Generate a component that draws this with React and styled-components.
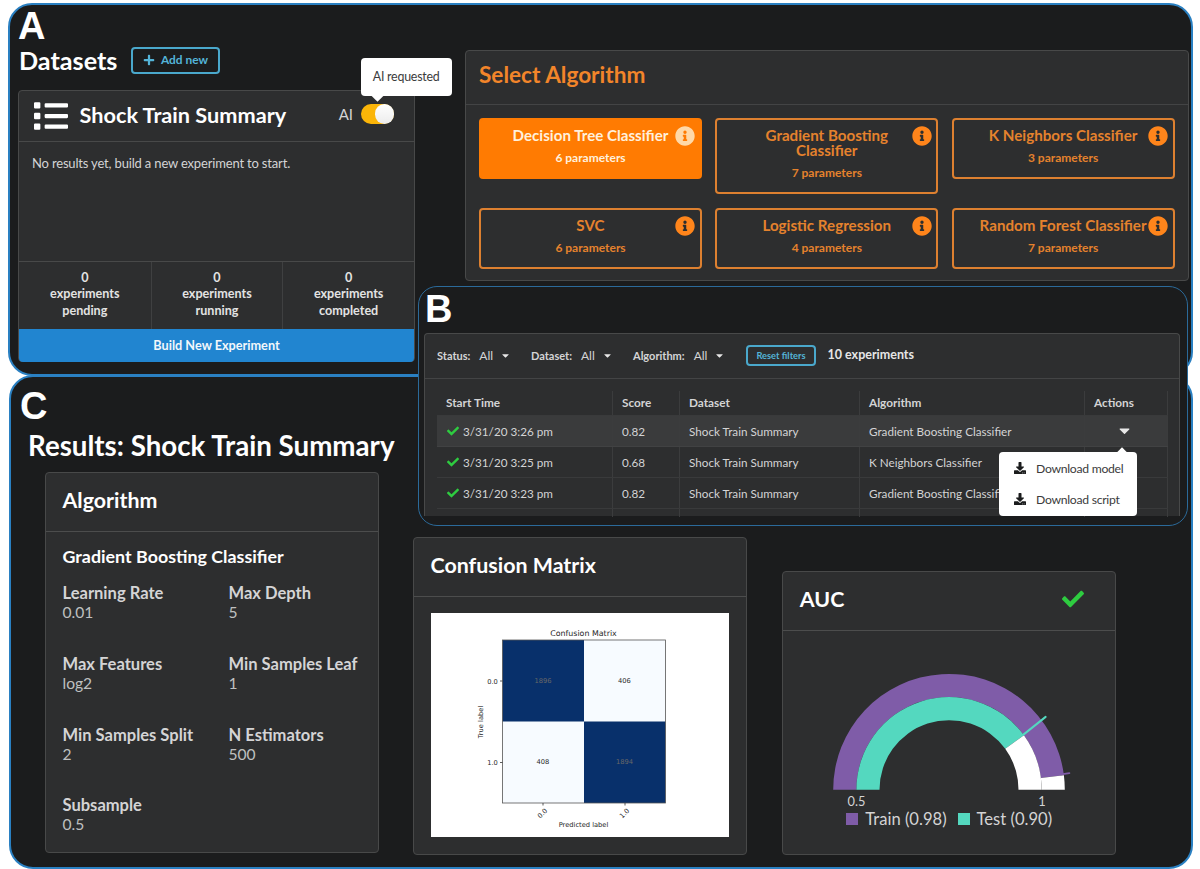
import React from "react";
import styled, { createGlobalStyle, css } from "styled-components";
import { FaList, FaPlus, FaInfoCircle, FaCheck, FaDownload, FaCaretDown } from "react-icons/fa";

const GlobalStyle = createGlobalStyle`
  *, *::before, *::after { box-sizing: border-box; }
  html, body { margin: 0; background: #fff; overflow: hidden; }
  body { font-family: Lato, "Liberation Sans", sans-serif; font-size: 13px; color: #d4d4d5; }
  h1, h2, h3, p, dl, dt, dd { margin: 0; font-weight: inherit; font-size: inherit; }
  button { font-family: inherit; margin: 0; padding: 0; cursor: pointer; }
  svg { display: block; flex-shrink: 0; }
`;

const Page = styled.main`
  position: relative;
  display: flex;
  flex-direction: column;
  width: 1200px;
  height: 869px;
  padding: 3px 0 0 8px;
  overflow: hidden;
`;

const Panel = styled.section`
  background: #1b1c1d;
  border: 2px solid #2a80c2;
  border-radius: 24px;
`;

const BuilderPanel = styled(Panel)`
  display: flex;
  align-items: flex-start;
  width: 1185px;
  height: 373px;
  padding-left: 8px;
`;

const ResultsPanel = styled(Panel)`
  width: 1184px;
  height: 494px;
  margin: -1px 0 0 1px;
  padding: 0 9px;
  flex-shrink: 0;
`;

/* Floats above the other two panels. */
const ExperimentsPanel = styled(Panel)`
  position: absolute;
  left: 418px;
  top: 286px;
  width: 770px;
  height: 240px;
  border: 1.5px solid #2b6a9a;
  border-radius: 19px;
  padding: 0 0 0 5px;
`;

const PanelLetter = styled.div`
  font-family: "Liberation Sans", Arial, sans-serif;
  font-weight: 700;
  font-size: 38px;
  line-height: 42px;
  color: #fff;
`;

const Card = styled.div`
  background: #2d2e2f;
  border: 1px solid #484949;
  border-radius: 4px;
`;

/* ---------- Datasets ---------- */

const DatasetsColumn = styled.div`
  width: 397px;
`;

const DatasetsLetter = styled(PanelLetter)`
  height: 38px;
  padding-left: 0;
`;

const TitleRow = styled.div`
  display: flex;
  align-items: center;
  height: 34px;
  padding-left: 1px;
`;

const PageTitle = styled.h1`
  width: 112px;
  font-size: 25.2px;
  font-weight: 700;
  line-height: 33px;
  color: #fff;
`;

const OutlineButton = styled.button`
  display: flex;
  align-items: center;
  justify-content: center;
  gap: 6px;
  padding-bottom: 1px;
  background: transparent;
  border: 2px solid #4aa8cc;
  border-radius: 4px;
  color: #54b4d8;
  font-weight: 700;
  width: ${(p) => p.$w}px;
  height: ${(p) => p.$h}px;
  font-size: ${(p) => p.$size}px;
`;

const DatasetCard = styled(Card)`
  margin-top: 13px;
  height: 272px;
`;

const DatasetHeader = styled.div`
  display: flex;
  align-items: center;
  height: 51px;
  padding: 0 20px 0 15px;
  border-bottom: 1px solid #484949;
`;

const DatasetName = styled.h2`
  margin: -2px 0 0 11.5px;
  flex: 1;
  font-size: 21.7px;
  font-weight: 700;
  color: #fff;
`;

const AiToggle = styled.div`
  position: relative;
  display: flex;
  align-items: center;
  gap: 8px;
  margin-top: -4px;
  font-size: 15px;
  line-height: 18px;
`;

const Switch = styled.span`
  display: flex;
  justify-content: flex-end;
  width: 33px;
  height: 20px;
  border-radius: 10px;
  background: #fbb508;
  &::after {
    content: "";
    width: 19px;
    height: 20px;
    border-radius: 10px;
    background: linear-gradient(#fff, #ececec);
  }
`;

const popupBase = css`
  position: absolute;
  background: #fff;
  color: #3b3b3c;
  border-radius: 4px;
  &::before {
    content: "";
    position: absolute;
    width: 9px;
    height: 9px;
    background: #fff;
    transform: rotate(45deg);
  }
`;

const Tooltip = styled.div`
  ${popupBase}
  left: 22px;
  bottom: 28px;
  width: 91px;
  height: 38px;
  line-height: 37px;
  text-align: center;
  font-size: 12.4px;
  letter-spacing: -0.22px;
  &::before { left: 12px; bottom: -4px; }
`;

const EmptyNote = styled.p`
  height: 120px;
  padding: 13px 13px;
  line-height: 16px;
  font-size: 13px;
  letter-spacing: -0.17px;
  border-bottom: 1px solid #484949;
`;

const Stats = styled.div`
  display: grid;
  grid-template-columns: repeat(3, 1fr);
  height: 67px;
`;

const Stat = styled.div`
  padding: 7.5px 20px 0;
  text-align: center;
  font-weight: 700;
  font-size: 12.6px;
  line-height: 16.5px;
  color: #e3e3e3;
  & + & { border-left: 1px solid #3f4041; }
`;

const BuildButton = styled.button`
  display: block;
  width: 100%;
  height: 33px;
  padding-bottom: 2px;
  border: 0;
  border-radius: 0 0 4px 4px;
  background: #2185d0;
  color: #f2f7fb;
  font-weight: 700;
  font-size: 12.7px;
`;

/* ---------- Algorithm picker ---------- */

const PickerCard = styled(Card)`
  width: 724px;
  height: 231px;
  margin: 45px 0 0 50px;
  flex-shrink: 0;
`;

const PickerTitle = styled.h2`
  height: 54px;
  padding-left: 13px;
  line-height: 47px;
  font-size: 22.6px;
  font-weight: 700;
  color: #f2852a;
  border-bottom: 1px solid #434445;
`;

const AlgorithmGrid = styled.div`
  display: grid;
  grid-template-columns: repeat(3, 223px);
  column-gap: 13.3px;
  row-gap: 13.5px;
  align-items: start;
  padding: 13px;
`;

const AlgorithmButton = styled.button`
  position: relative;
  min-height: 61px;
  padding: 8px 30px 12px;
  border: 2px solid ${(p) => (p.$active ? "#ff7b02" : "#dd8030")};
  border-radius: 4px;
  background: ${(p) => (p.$active ? "#ff7b02" : "transparent")};
  color: ${(p) => (p.$active ? "#fff0dc" : "#e5822d")};
  text-align: center;
  font-weight: 700;
`;

const AlgorithmName = styled.span`
  display: block;
  margin: 0 -12px;
  padding: 0 ${(p) => (p.$wrap ? 20 : 0)}px;
  font-size: 15.15px;
  line-height: 15px;
  white-space: ${(p) => (p.$wrap ? "normal" : "nowrap")};
`;

const AlgorithmParams = styled.span`
  display: block;
  margin-top: 7px;
  font-size: 12px;
  line-height: 15px;
`;

const InfoBadge = styled(FaInfoCircle)`
  position: absolute;
  right: 4.7px;
  top: 6px;
  width: 20px;
  height: 20px;
  color: ${(p) => (p.$active ? "#ffd9a8" : "#ff851b")};
`;

/* ---------- Experiments ---------- */

const ExperimentsLetter = styled(PanelLetter)`
  height: 46px;
  padding: 1px 0 0 1px;
`;

const ExperimentsCard = styled(Card)`
  width: 756px;
  height: 183px;
  border-bottom: 0;
  border-radius: 4px 4px 0 0;
`;

const FilterBar = styled.div`
  display: flex;
  align-items: center;
  height: 45px;
  padding: 0 0 1px 12px;
  border-bottom: 1px solid #434445;
`;

const Filter = styled.div`
  display: flex;
  align-items: center;
  width: ${(p) => p.$w}px;
  font-size: 11px;
`;

const FilterLabel = styled.span`
  font-weight: 700;
  margin-right: 9px;
`;

const FilterValue = styled.span`
  font-size: 12px;
  margin-right: 7px;
`;

const Count = styled.span`
  margin: -2px 0 0 11.5px;
  font-size: 12.5px;
  font-weight: 700;
  color: #e6e6e6;
`;

const Table = styled.div`
  margin: 12px 0 0 12px;
  width: 731px;
`;

const Row = styled.div`
  display: grid;
  grid-template-columns: 176px 67px 180px 225px 83px;
  height: ${(p) => (p.$head ? 25 : 31)}px;
  background: ${(p) => (p.$active ? "#3a3b3c" : "transparent")};
  border-bottom: 1px solid ${(p) => (p.$active ? "#414243" : "#393a3b")};
  font-weight: ${(p) => (p.$head ? 700 : 400)};
  font-size: ${(p) => (p.$head ? 11.8 : 11.7)}px;
`;

const Cell = styled.div`
  display: flex;
  align-items: center;
  gap: 4px;
  padding: 0 0 1px 9px;
  border-right: 1px solid #3b3c3d;
  white-space: nowrap;
`;

const TimeCell = styled(Cell)`
  gap: 4px;
  padding-left: 10px;
`;

const ActionCell = styled(Cell)`
  position: relative;
  padding-left: 31px;
  color: #e8e8e8;
`;

const TableTail = styled(Row)`
  height: 8px;
  border: 0;
`;

const CheckMark = styled(FaCheck)`
  color: #2ecc40;
`;

const Menu = styled.div`
  ${popupBase}
  z-index: 2;
  left: -86px;
  top: 36px;
  width: 138px;
  height: 64px;
  padding-top: 1px;
  &::before { left: 119px; top: -3px; width: 8px; height: 8px; }
`;

const MenuItem = styled.div`
  display: flex;
  align-items: center;
  gap: 10px;
  height: 31px;
  padding: 0 0 1px 15px;
  font-size: 12.2px;
  letter-spacing: -0.28px;
  & svg { color: #1b1c1d; }
`;

/* ---------- Results ---------- */

const ResultsLetter = styled(PanelLetter)`
  height: 49px;
  padding: 8px 0 0 0;
`;

const ResultsTitle = styled.h1`
  height: 46px;
  padding-left: 8px;
  line-height: 40px;
  font-size: 27.7px;
  font-weight: 700;
  color: #fff;
`;

const ResultCards = styled.div`
  display: flex;
  align-items: flex-start;
  gap: 34.5px;
  padding-left: 25px;
`;

const ResultCard = styled(Card)`
  width: 333.5px;
  height: ${(p) => p.$h}px;
  margin-top: ${(p) => p.$top}px;
  margin-left: ${(p) => p.$left || 0}px;
  flex-shrink: 0;
`;

const ResultHeader = styled.div`
  display: flex;
  align-items: center;
  justify-content: space-between;
  height: 59px;
  padding: 0 31px 5px 16.5px;
  border-bottom: 1px solid #4c4d4d;
  font-size: 21.4px;
  font-weight: 700;
  color: #fff;
`;

const ModelName = styled.h3`
  padding: 12.5px 0 0 16.5px;
  line-height: 22px;
  font-size: 17.85px;
  font-weight: 700;
  color: #fff;
`;

const Params = styled.dl`
  display: grid;
  grid-template-columns: 166px 1fr;
  grid-auto-rows: 70.8px;
  padding: 16.5px 0 0 16.5px;
`;

const ParamName = styled.dt`
  font-size: 16.55px;
  font-weight: 700;
  line-height: 20px;
  white-space: nowrap;
`;

const ParamValue = styled.dd`
  font-size: 15.6px;
  line-height: 19px;
  color: #bfc0c0;
`;

const MatrixPlot = styled.svg`
  margin: 16px 0 0 16.5px;
  background: #fff;
  font-family: "DejaVu Sans", sans-serif;
`;

const Gauge = styled.svg`
  margin: 0 auto;
`;

const Legend = styled.div`
  display: flex;
  align-items: center;
  padding-left: 63px;
  height: 16px;
  font-size: 16.6px;
`;

const Swatch = styled.span`
  width: 12px;
  height: 12px;
  margin-right: 7px;
  background: ${(p) => p.$color};
`;

const LegendLabel = styled.span`
  margin-right: 11px;
`;

const ALGORITHMS = [
  { name: "Decision Tree Classifier", count: 6, active: true },
  { name: "Gradient Boosting Classifier", count: 7, wrap: true },
  { name: "K Neighbors Classifier", count: 3 },
  { name: "SVC", count: 6 },
  { name: "Logistic Regression", count: 4 },
  { name: "Random Forest Classifier", count: 7 },
];

const EXPERIMENTS = [
  { time: "3/31/20 3:26 pm", score: "0.82", algorithm: "Gradient Boosting Classifier" },
  { time: "3/31/20 3:25 pm", score: "0.68", algorithm: "K Neighbors Classifier" },
  { time: "3/31/20 3:23 pm", score: "0.82", algorithm: "Gradient Boosting Classifier" },
];

const PARAMS = [
  ["Learning Rate", "0.01"],
  ["Max Depth", "5"],
  ["Max Features", "log2"],
  ["Min Samples Leaf", "1"],
  ["Min Samples Split", "2"],
  ["N Estimators", "500"],
  ["Subsample", "0.5"],
];

const FILTERS = [
  ["Status:", 94],
  ["Dataset:", 102],
  ["Algorithm:", 113],
];

function Datasets() {
  return (
    <DatasetsColumn>
      <DatasetsLetter>A</DatasetsLetter>
      <TitleRow>
        <PageTitle>Datasets</PageTitle>
        <OutlineButton $w={89} $h={27} $size={11.9}>
          <FaPlus size={12} />
          Add new
        </OutlineButton>
      </TitleRow>
      <DatasetCard>
        <DatasetHeader>
          <FaList size={34} color="#fff" />
          <DatasetName>Shock Train Summary</DatasetName>
          <AiToggle>
            AI
            <Switch />
            <Tooltip>AI requested</Tooltip>
          </AiToggle>
        </DatasetHeader>
        <EmptyNote>No results yet, build a new experiment to start.</EmptyNote>
        <Stats>
          {["pending", "running", "completed"].map((s) => (
            <Stat key={s}>
              0<br />experiments<br />{s}
            </Stat>
          ))}
        </Stats>
        <BuildButton>Build New Experiment</BuildButton>
      </DatasetCard>
    </DatasetsColumn>
  );
}

function AlgorithmPicker() {
  return (
    <PickerCard>
      <PickerTitle>Select Algorithm</PickerTitle>
      <AlgorithmGrid>
        {ALGORITHMS.map((a) => (
          <AlgorithmButton key={a.name} $active={a.active}>
            <AlgorithmName $wrap={a.wrap}>{a.name}</AlgorithmName>
            <AlgorithmParams>{a.count} parameters</AlgorithmParams>
            <InfoBadge $active={a.active} />
          </AlgorithmButton>
        ))}
      </AlgorithmGrid>
    </PickerCard>
  );
}

function Experiments() {
  return (
    <ExperimentsPanel>
      <ExperimentsLetter>B</ExperimentsLetter>
      <ExperimentsCard>
        <FilterBar>
          {FILTERS.map(([label, w]) => (
            <Filter key={label} $w={w}>
              <FilterLabel>{label}</FilterLabel>
              <FilterValue>All</FilterValue>
              <FaCaretDown size={11} color="#e8e8e8" />
            </Filter>
          ))}
          <OutlineButton $w={70} $h={21} $size={9.3}>Reset filters</OutlineButton>
          <Count>10 experiments</Count>
        </FilterBar>
        <Table>
          <Row $head>
            {["Start Time", "Score", "Dataset", "Algorithm", "Actions"].map((h) => (
              <Cell key={h}>{h}</Cell>
            ))}
          </Row>
          {EXPERIMENTS.map((e, i) => (
            <Row key={e.time} $active={i === 0}>
              <TimeCell>
                <CheckMark size={12} />
                {e.time}
              </TimeCell>
              <Cell>{e.score}</Cell>
              <Cell>Shock Train Summary</Cell>
              <Cell>{e.algorithm}</Cell>
              <ActionCell>
                {i === 0 && (
                  <>
                    <FaCaretDown size={17} />
                    <Menu>
                      <MenuItem><FaDownload size={12} />Download model</MenuItem>
                      <MenuItem><FaDownload size={12} />Download script</MenuItem>
                    </Menu>
                  </>
                )}
              </ActionCell>
            </Row>
          ))}
          <TableTail>
            {[0, 1, 2, 3, 4].map((c) => <Cell key={c} />)}
          </TableTail>
        </Table>
      </ExperimentsCard>
    </ExperimentsPanel>
  );
}

function ConfusionMatrix() {
  return (
    <MatrixPlot width="298" height="224" viewBox="430.5 613.5 298 224" textAnchor="middle" fontSize="6.7" fill="#262626">
      <text x="583" y="636" fontSize="7.9">Confusion Matrix</text>
      <rect x="502" y="640.5" width="163" height="163" fill="#f7fbff" />
      <rect x="502" y="640.5" width="81.5" height="81.5" fill="#08306b" />
      <rect x="583.5" y="722" width="81.5" height="81.5" fill="#08306b" />
      <rect x="502" y="640.5" width="163" height="163" fill="none" stroke="#555" strokeWidth="0.8" />
      <path d="M499.5 681.5h2.5M499.5 763h2.5M542.5 803.5v2.5M624.5 803.5v2.5" stroke="#333" strokeWidth="0.8" />
      <text x="542.5" y="683.2" fill="#686868">1896</text>
      <text x="624" y="683.2">406</text>
      <text x="542.5" y="764.8">408</text>
      <text x="624" y="764.8" fill="#686868">1894</text>
      <text x="492" y="684.2">0.0</text>
      <text x="492" y="765.7">1.0</text>
      <text transform="translate(482.5 722.5) rotate(-90)">True label</text>
      <text transform="translate(543.5 815.5) rotate(-45)">0.0</text>
      <text transform="translate(625.5 815.5) rotate(-45)">1.0</text>
      <text x="583" y="827.8">Predicted label</text>
    </MatrixPlot>
  );
}

const polar = (r, deg) => {
  const a = (deg * Math.PI) / 180;
  return `${r * Math.cos(a)} ${-r * Math.sin(a)}`;
};

const ring = (outer, inner, from, to) =>
  `M${polar(outer, from)} A${outer} ${outer} 0 0 1 ${polar(outer, to)} L${polar(inner, to)} A${inner} ${inner} 0 0 0 ${polar(inner, from)} Z`;

function AucGauge() {
  return (
    <Gauge width="260" height="180" viewBox="-130 -158.7 260 180">
      <path d={ring(115.8, 92.6, 180, 7.2)} fill="#7f5ca8" />
      <path d={ring(115.8, 92.6, 7.2, 0)} fill="#fff" />
      <path d={ring(92.6, 69.5, 180, 36)} fill="#54d8bf" />
      <path d={ring(92.6, 69.5, 36, 0)} fill="#fff" />
      <path d={`M${polar(92.6, 36.5)} L${polar(121, 37)}`} stroke="#54d8bf" strokeWidth="2" strokeLinecap="round" />
      <path d={`M${polar(113, 7.8)} L${polar(121.5, 7.8)}`} stroke="#7f5ca8" strokeWidth="1.8" strokeLinecap="round" />
      <g fontSize="12.8" fill="#d4d4d5" textAnchor="middle">
        <text x="-92.5" y="16">0.5</text>
        <text x="93" y="16">1</text>
      </g>
    </Gauge>
  );
}

function Results() {
  return (
    <ResultsPanel>
      <ResultsLetter>C</ResultsLetter>
      <ResultsTitle>Results: Shock Train Summary</ResultsTitle>
      <ResultCards>
        <ResultCard $h={381} $top={0}>
          <ResultHeader>Algorithm</ResultHeader>
          <ModelName>Gradient Boosting Classifier</ModelName>
          <Params>
            {PARAMS.map(([name, value]) => (
              <div key={name}>
                <ParamName>{name}</ParamName>
                <ParamValue>{value}</ParamValue>
              </div>
            ))}
          </Params>
        </ResultCard>
        <ResultCard $h={318} $top={65}>
          <ResultHeader>Confusion Matrix</ResultHeader>
          <ConfusionMatrix />
        </ResultCard>
        <ResultCard $h={284} $top={99} $left={1.3}>
          <ResultHeader>
            AUC
            <CheckMark size={22} />
          </ResultHeader>
          <AucGauge />
          <Legend>
            <Swatch $color="#7f5ca8" />
            <LegendLabel>Train (0.98)</LegendLabel>
            <Swatch $color="#54d8bf" />
            <LegendLabel>Test (0.90)</LegendLabel>
          </Legend>
        </ResultCard>
      </ResultCards>
    </ResultsPanel>
  );
}

export default function App() {
  return (
    <>
      <GlobalStyle />
      <Page>
        <BuilderPanel>
          <Datasets />
          <AlgorithmPicker />
        </BuilderPanel>
        <Results />
        <Experiments />
      </Page>
    </>
  );
}
